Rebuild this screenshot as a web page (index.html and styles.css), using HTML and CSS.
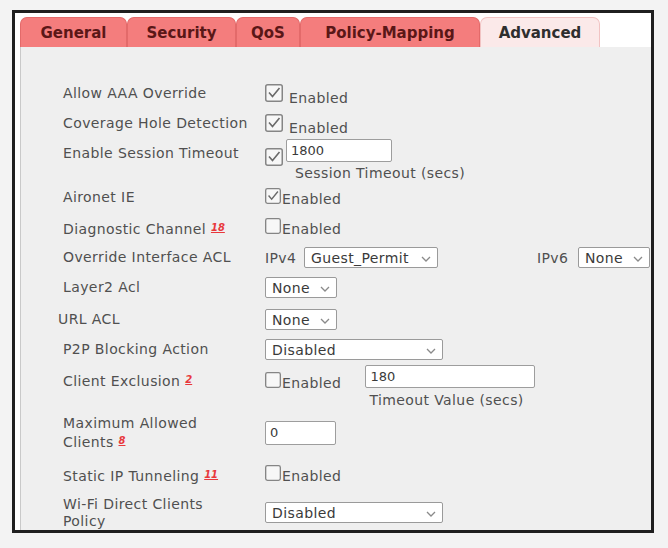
FILE: index.html
```html
<!DOCTYPE html>
<html>
<head>
    <meta name="viewport" content="width=device-width, initial-scale=1.0">
    <link rel="stylesheet" href="styles.css">
</head>
<body>
    <svg class="defs" width="0" height="0">
        <symbol id="box-on" viewBox="0 0 18 18">
            <rect x="0.75" y="0.75" width="16.5" height="16.5" rx="2" fill="#f7f7f7" stroke="#858585" stroke-width="1.5"/>
            <path d="M4 8.5 L7.5 12.5 L14.5 4" fill="none" stroke="#6a6a6a" stroke-width="1.6"/>
        </symbol>
        <symbol id="box-off" viewBox="0 0 18 18">
            <rect x="0.75" y="0.75" width="16.5" height="16.5" rx="2" fill="#f7f7f7" stroke="#858585" stroke-width="1.5"/>
        </symbol>
        <symbol id="chevron" viewBox="0 0 10 6">
            <path d="M1 1 L5 5 L9 1" fill="none" stroke="#8a8a8a" stroke-width="1.3"/>
        </symbol>
    </svg>

    <div class="frame">
        <div class="tabs">
            <span class="tab tab-general">General</span>
            <span class="tab tab-security">Security</span>
            <span class="tab tab-qos">QoS</span>
            <span class="tab tab-policy">Policy-Mapping</span>
            <span class="tab tab-advanced active">Advanced</span>
        </div>

        <div class="panel">
            <div class="row">
                <div class="label">Allow AAA Override</div>
                <div class="ctrl">
                    <span class="check"><svg class="box"><use href="#box-on"/></svg><span>Enabled</span></span>
                </div>
            </div>
            <div class="row">
                <div class="label">Coverage Hole Detection</div>
                <div class="ctrl">
                    <span class="check"><svg class="box"><use href="#box-on"/></svg><span>Enabled</span></span>
                </div>
            </div>
            <div class="row row-session">
                <div class="label">Enable Session Timeout</div>
                <div class="ctrl ctrl-session">
                    <svg class="box box-session"><use href="#box-on"/></svg>
                    <div class="field">
                        <span class="input input-session">1800</span>
                        <span class="caption">Session Timeout (secs)</span>
                    </div>
                </div>
            </div>
            <div class="row">
                <div class="label">Aironet IE</div>
                <div class="ctrl">
                    <span class="check tight"><svg class="box small"><use href="#box-on"/></svg><span>Enabled</span></span>
                </div>
            </div>
            <div class="row">
                <div class="label">Diagnostic Channel <a class="note">18</a></div>
                <div class="ctrl">
                    <span class="check tight"><svg class="box small"><use href="#box-off"/></svg><span>Enabled</span></span>
                </div>
            </div>
            <div class="row">
                <div class="label">Override Interface ACL</div>
                <div class="ctrl ctrl-acl">
                    <span class="proto">IPv4</span>
                    <span class="select sel-guest">Guest_Permit<svg class="chev"><use href="#chevron"/></svg></span>
                    <span class="proto proto-v6">IPv6</span>
                    <span class="select sel-none">None<svg class="chev"><use href="#chevron"/></svg></span>
                </div>
            </div>
            <div class="row">
                <div class="label">Layer2 Acl</div>
                <div class="ctrl">
                    <span class="select sel-none">None<svg class="chev"><use href="#chevron"/></svg></span>
                </div>
            </div>
            <div class="row row-url">
                <div class="label label-url">URL ACL</div>
                <div class="ctrl">
                    <span class="select sel-none">None<svg class="chev"><use href="#chevron"/></svg></span>
                </div>
            </div>
            <div class="row">
                <div class="label">P2P Blocking Action</div>
                <div class="ctrl">
                    <span class="select sel-wide">Disabled<svg class="chev"><use href="#chevron"/></svg></span>
                </div>
            </div>
            <div class="row row-exclusion">
                <div class="label">Client Exclusion <a class="note">2</a></div>
                <div class="ctrl ctrl-exclusion">
                    <span class="check tight"><svg class="box small"><use href="#box-off"/></svg><span>Enabled</span></span>
                    <div class="field field-timeout">
                        <span class="input input-timeout">180</span>
                        <span class="caption caption-timeout">Timeout Value (secs)</span>
                    </div>
                </div>
            </div>
            <div class="row row-clients">
                <div class="label">Maximum Allowed<br>Clients <a class="note">8</a></div>
                <div class="ctrl">
                    <span class="input input-clients">0</span>
                </div>
            </div>
            <div class="row">
                <div class="label">Static IP Tunneling <a class="note">11</a></div>
                <div class="ctrl">
                    <span class="check tight"><svg class="box small"><use href="#box-off"/></svg><span>Enabled</span></span>
                </div>
            </div>
            <div class="row">
                <div class="label">Wi-Fi Direct Clients<br>Policy</div>
                <div class="ctrl">
                    <span class="select sel-wide sel-low">Disabled<svg class="chev"><use href="#chevron"/></svg></span>
                </div>
            </div>
        </div>
    </div>
</body>
</html>
```

FILE: styles.css
```css
body {
    margin: 0;
    background: #f3f3f3;
    font-family: "DejaVu Sans", Verdana, sans-serif;
    font-size: 14px;
    letter-spacing: 0.4px;
    color: #505050;
}
.defs {
    position: absolute;
}
.frame {
    margin: 10px 0 0 12px;
    width: 636px;
    height: 517px;
    border: 3px solid #1f1f1f;
    background: #fff;
    display: flex;
    flex-direction: column;
    overflow: hidden;
}
.tabs {
    display: flex;
    height: 34px;
    padding: 4px 0 0 5px;
    box-sizing: border-box;
}
.tab {
    height: 30px;
    line-height: 30px;
    text-align: center;
    box-sizing: border-box;
    background: #f47d7d;
    border: 1px solid #e36a6a;
    border-bottom: none;
    border-radius: 7px 7px 0 0;
    font-size: 15px;
    font-weight: bold;
    letter-spacing: 0;
    color: #5a1717;
}
.tab-general { width: 107px; }
.tab-security { width: 109px; }
.tab-qos { width: 64px; }
.tab-policy { width: 180px; }
.tab-advanced { width: 120px; }
.tab.active {
    background: #fbe9e9;
    border-color: #f1c3c3;
    color: #2e2e2e;
}
.panel {
    flex: 1;
    margin-left: 5px;
    border-left: 1px solid #c9c9c9;
    background: #efefef;
    padding: 32px 0 0 42px;
}
.row {
    display: flex;
    align-items: flex-start;
    height: 30px;
}
.row-session {
    height: 44px;
}
.row-url {
    margin-top: 2px;
}
.row-exclusion {
    height: 44px;
}
.row-clients {
    height: 51px;
}
.label {
    width: 202px;
    flex: none;
    padding-top: 6px;
    line-height: 17px;
    white-space: nowrap;
}
.label-url {
    margin-left: -5px;
    width: 207px;
}
.note {
    color: #e8383c;
    font-size: 10px;
    font-style: italic;
    font-weight: bold;
    letter-spacing: 0;
    text-decoration: underline;
    vertical-align: 3px;
}
.ctrl {
    display: flex;
    align-items: flex-start;
    white-space: nowrap;
}
.check {
    display: flex;
    align-items: flex-end;
    margin-top: 5px;
}
.check span {
    margin-left: 6px;
    line-height: 14px;
    margin-bottom: -3px;
}
.check.tight span {
    margin-left: 1px;
    margin-bottom: -2px;
}
.box {
    width: 18px;
    height: 18px;
    flex: none;
}
.box.small {
    width: 16px;
    height: 16px;
}
.box-session {
    margin-top: 9px;
}
.field {
    display: flex;
    flex-direction: column;
    margin-left: 3px;
}
.input {
    display: block;
    height: 23px;
    line-height: 21px;
    padding-left: 4px;
    box-sizing: border-box;
    background: #fff;
    border: 1px solid #9d9d9d;
    border-radius: 2px;
    font-size: 13px;
    letter-spacing: 0;
    color: #3a3a3a;
}
.input-session {
    width: 106px;
}
.caption {
    margin: 3px 0 0 9px;
    line-height: 16px;
}
.ctrl-exclusion .check {
    margin-top: 7px;
}
.field-timeout {
    margin-left: 24px;
}
.input-timeout {
    width: 170px;
}
.caption-timeout {
    margin: 4px 0 0 4px;
}
.input-clients {
    width: 71px;
    height: 24px;
    margin-top: 12px;
}
.proto {
    margin-top: 7px;
    width: 39px;
}
.proto-v6 {
    margin-left: 99px;
    width: 41px;
}
.select {
    display: flex;
    align-items: center;
    justify-content: space-between;
    height: 21px;
    margin-top: 4px;
    padding: 0 6px 0 6px;
    box-sizing: border-box;
    background: #fff;
    border: 1px solid #9a9a9a;
    border-radius: 2px;
    color: #3a3a3a;
}
.sel-guest {
    width: 134px;
}
.sel-none {
    width: 72px;
}
.sel-wide {
    width: 178px;
}
.sel-low {
    margin-top: 12px;
}
.chev {
    width: 10px;
    height: 6px;
    margin-top: 3px;
}
```
